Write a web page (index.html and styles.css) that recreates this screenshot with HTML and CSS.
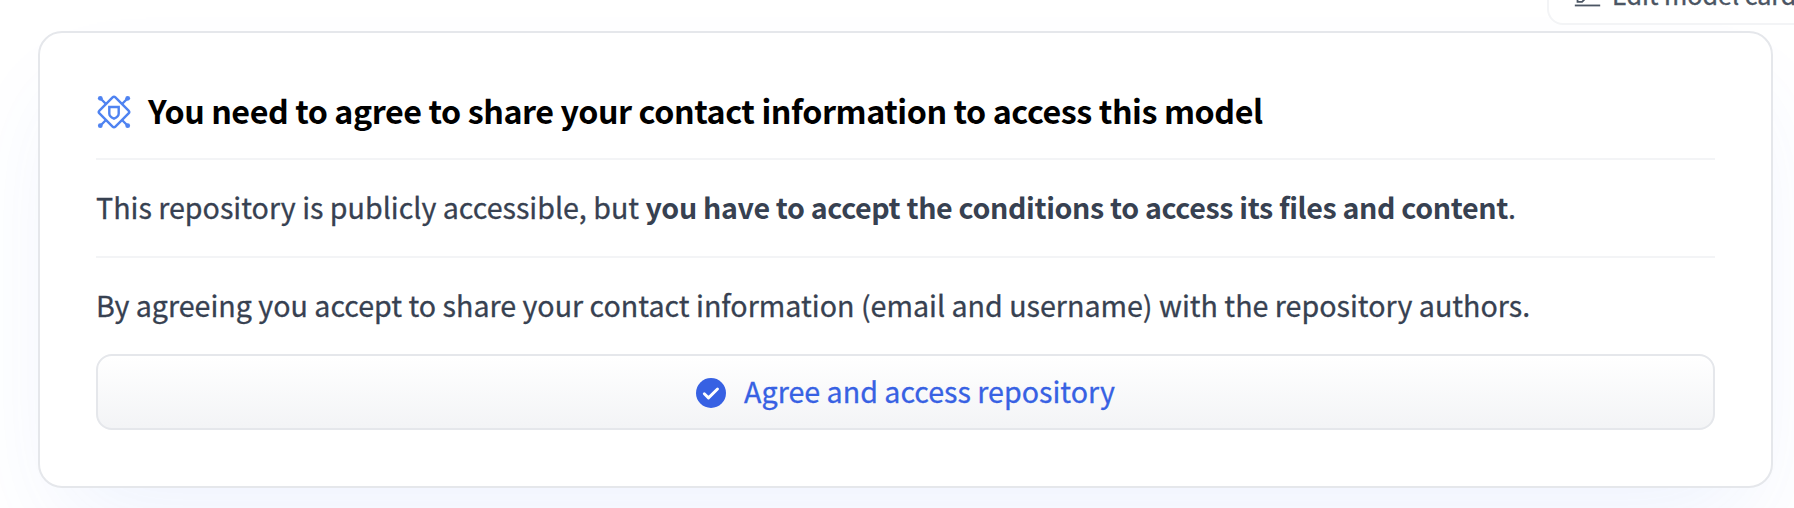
FILE: index.html
```html
<!DOCTYPE html>
<html lang="en">
<head>
<meta charset="utf-8">
<title>Model access</title>
<link rel="stylesheet" href="styles.css">
</head>
<body>
<div class="toolbar">
  <button class="edit-button">
    <svg class="edit-icon" viewBox="0 0 32 32" fill="currentColor"><path d="M2 26h28v2H2z"/><path d="M25.4 9c.8-.8.8-2 0-2.8l-3.6-3.6c-.8-.8-2-.8-2.8 0l-15 15V24h6.4l15-15zm-5-5L24 7.600l-3 3L17.400 7l3-3zM6 22v-3.600l10-10 3.600 3.600-10 10H6z"/></svg>
    <span class="edit-label">Edit model card</span>
  </button>
</div>
<main class="card">
  <h2 class="title">
    <svg class="gate-icon" viewBox="-18 -18 36 36" fill="none" stroke="currentColor" stroke-width="2.400">
      <rect x="-11.300" y="-11.300" width="22.600" height="22.600" rx="2" transform="rotate(45)"/>
      <path d="M-8-8l-5.500-5.500M8-8l5.500-5.500M-8 8l-5.500 5.500M8 8l5.500 5.500"/>
      <g fill="currentColor" stroke="none"><circle cx="-13.700" cy="-13.700" r="2.400"/><circle cx="13.700" cy="-13.700" r="2.400"/><circle cx="-13.700" cy="13.700" r="2.400"/><circle cx="13.700" cy="13.700" r="2.400"/></g>
      <path d="M-4.700-5h9.400V1.400C4.700 4.200 2.400 5.600 0 6.600-2.400 5.600-4.700 4.200-4.700 1.400z"/>
    </svg>
    <span class="title-text">You need to agree to share your contact information to access this model</span>
  </h2>
  <p class="notice"><span class="notice-lead">This repository is publicly accessible, but </span><strong class="notice-strong">you have to accept the conditions to access its files and content</strong>.</p>
  <p class="consent">By agreeing you accept to share your contact information (email and username) with the repository authors.</p>
  <button class="agree-button">
    <svg class="check-icon" viewBox="0 0 30 30"><circle cx="15" cy="15" r="15" fill="currentColor"/><path d="M8.300 15.700l4.200 4.200 9-8.900" fill="none" stroke="#fff" stroke-width="2.900" stroke-linecap="round" stroke-linejoin="round"/></svg>
    <span class="agree-label">Agree and access repository</span>
  </button>
</main>
</body>
</html>
```
FILE: styles.css
```css
* { box-sizing: border-box; }
body {
  margin: 0;
  height: 508px;
  overflow: hidden;
  background: #fff;
  color: #374151;
  font-family: "Noto Sans CJK SC", "Noto Sans", sans-serif;
  font-size: 28.640px;
}
button { font: inherit; margin: 0; }
.toolbar {
  display: flex;
  align-items: flex-end;
  justify-content: flex-end;
  height: 25px;
  margin-right: -40px;
}
.edit-button {
  flex: none;
  display: flex;
  align-items: center;
  gap: 10px;
  width: 287px;
  height: 64px;
  padding: 2px 0 0 24px;
  border: 2px solid #f3f4f6;
  border-radius: 16px;
  background: #fff;
  color: #4b5563;
  white-space: nowrap;
}
.edit-icon { flex: none; width: 29px; height: 29px; margin-top: 2px; color: #4b5563; }
.edit-label { font-size: 25.100px; line-height: 40px; -webkit-text-stroke: .4px; }
.card {
  width: 1735px;
  height: 457px;
  margin: 6px 0 0 38px;
  padding: 48px 56px 56px;
  border: 2px solid #e5e7eb;
  border-radius: 24px;
  background: #fff;
  box-shadow: 0 50px 100px -24px rgba(59, 110, 246, .09);
}
.title {
  display: flex;
  align-items: center;
  gap: 16px;
  height: 79px;
  margin: 0;
  padding-bottom: 15px;
  border-bottom: 2px solid #f3f4f6;
  color: #000;
  font-size: 32.240px;
  letter-spacing: -.43px;
  line-height: 62px;
  white-space: nowrap;
}
.title-text { padding-bottom: 4px; line-height: 58px; }
.gate-icon { flex: none; width: 36px; height: 36px; color: #4f83f1; }
.notice, .consent { margin: 0; line-height: 94px; white-space: nowrap; -webkit-text-stroke: .3px; }
.notice { height: 98px; border-bottom: 2px solid #f3f4f6; }
.notice-strong { letter-spacing: -.35px; -webkit-text-stroke: 0; }
.consent { height: 96px; }
.agree-button {
  display: flex;
  align-items: center;
  justify-content: center;
  gap: 18px;
  width: 100%;
  height: 76px;
  padding: 0;
  border: 2px solid #e5e7eb;
  border-radius: 16px;
  background: linear-gradient(#fff, #f3f4f6);
  color: #3761e3;
}
.check-icon { width: 30px; height: 30px; margin-top: 1px; }
.agree-label { padding-bottom: 2px; line-height: 66px; -webkit-text-stroke: .3px; }
```
